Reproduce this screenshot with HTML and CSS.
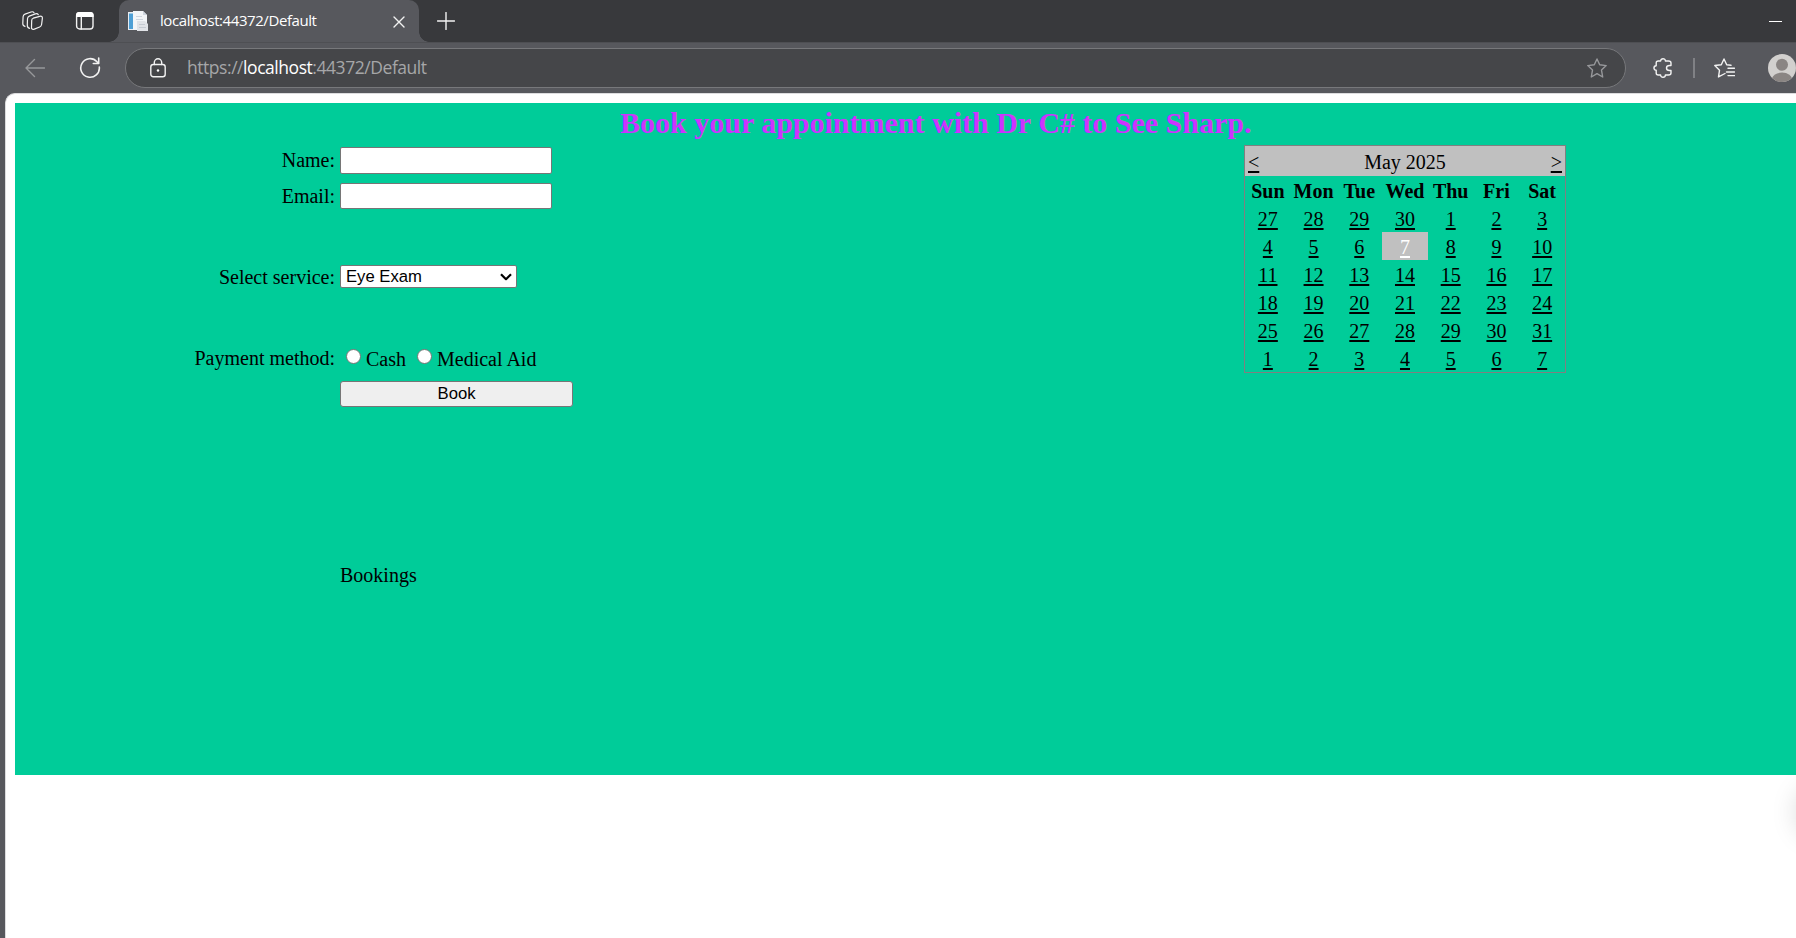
FILE: index.html
```html
<!DOCTYPE html>
<html lang="en">
<head>
<meta charset="utf-8">
<title>localhost:44372/Default</title>
<link rel="stylesheet" href="styles.css">
</head>
<body>
<div class="tabstrip">
  <svg class="workspaces" width="24" height="24" viewBox="0 0 24 24"><path d="M12.300 8.200 18.700 6.300Q21.600 5.700 21.400 8.200L20.600 14.500Q20.300 16.400 18.700 17L13.300 19.100Q10.300 20 10.500 17.300L10.700 10.500Q10.700 8.700 12.300 8.200ZM8.600 18.300Q6.200 17.800 6.300 15.300L6.500 8.700Q6.600 6.700 8.300 6.100L14.300 3.900Q16.500 3.300 17.300 4.700M4 16.300Q1.700 15.800 1.800 13.500L2.100 6.700Q2.200 4.700 4 4.100L10 2Q12.200 1.300 13 2.700"/></svg>
  <svg class="tabmenu" width="20" height="20" viewBox="0 0 20 20"><rect x="1.600" y="1.600" width="16.400" height="16.400" rx="3"/><path class="solid" d="M1 6V4Q1 1 4 1H15.500Q18.600 1 18.600 4V6Z"/><path d="M6.300 6V18"/></svg>
  <div class="tab">
    <svg class="favicon" width="20" height="20" viewBox="0 0 20 20"><path fill="#e9edf2" d="M0 1H9V19H0Z"/><path fill="#4f9fd5" d="M1 2.500H5V18H1Z"/><path fill="#f3f5f8" d="M5 0H15L19 4V19H5Z"/><path fill="#cfd6df" d="M15 0 19 4H15ZM8 5H14V6H8ZM8 8H15V9H8Z"/><path fill="#e1e3e8" d="M9 10H17L20 13V20H9Z"/><path fill="#c5cad2" d="M11 13H17V14H11ZM11 16H18V17H11Z"/></svg>
    <span class="tab-title">localhost:44372/Default</span>
    <svg class="close" width="12" height="12" viewBox="0 0 12 12"><path d="M1 1 11 11M11 1 1 11"/></svg>
  </div>
  <svg class="newtab" width="18" height="18" viewBox="0 0 18 18"><path d="M9 .5V17.500M.5 9H17.500"/></svg>
  <span class="minimize"></span>
</div>
<div class="toolbar">
  <svg class="back" width="20" height="20" viewBox="0 0 20 20"><path d="M19.500 10H1M9.500 1.500 1 10 9.500 18.500"/></svg>
  <svg class="reload" width="22" height="22" viewBox="0 0 22 22"><path d="M20.300 10A9.300 9.300 0 1 1 18 4.800L19.700 6.500M19.700 1V6.500H14.300"/></svg>
  <div class="address">
    <svg class="lock" width="16" height="20" viewBox="0 0 16 20"><rect x=".8" y="6.500" width="14.400" height="12.300" rx="2.500"/><path d="M4.300 6.500V4.500A3.700 3.700 0 0 1 11.700 4.500V6.500"/><circle class="solid" cx="8" cy="12.500" r="1.200"/></svg>
    <span class="url">https://<b>localhost</b>:44372/Default</span>
    <svg class="star" width="20" height="20" viewBox="0 0 20 20"><path d="M10 1 12.700 6.800 19.200 7.600 14.500 12.100 15.700 19 10 15.600 4.300 19 5.500 12.100.8 7.600 7.300 6.800Z"/></svg>
  </div>
  <svg class="extensions" width="20" height="20" viewBox="0 0 20 20"><path d="M5.200 3H7.600C7.600 0 12.400 0 12.400 3H15.500Q18 3 18 5V7.500H16.500C12.500 7.500 12.500 12.500 16.500 12.500H18V15Q18 17 15.500 17H12.400C12.400 20 7.600 20 7.600 17H5.200Q3.200 17 3.200 15V12.300C.2 12.300.2 7.700 3.200 7.700V5Q3.200 3 5.200 3Z"/></svg>
  <span class="divider"></span>
  <svg class="favorites" width="21" height="20" viewBox="0 0 21 20"><path d="M11 15.500 4.500 18.900 5.500 12.300.8 7.500 7.300 6.700 10 1 12.700 6.700 17 7.300M14 10.300H20.500M12.500 14H20.500M14 17.600H20.500"/></svg>
  <svg class="avatar" width="28" height="28" viewBox="0 0 28 28"><defs><clipPath id="disc"><circle cx="14" cy="14" r="14"/></clipPath></defs><g clip-path="url(#disc)"><rect width="28" height="28" fill="#d2d0ce"/><circle cx="14" cy="10.700" r="6" fill="#8a8583"/><ellipse cx="14" cy="26.500" rx="10.500" ry="8" fill="#8a8583"/></g></svg>
</div>
<div class="viewport">
  <form class="panel">
    <h2>Book your appointment with Dr C# to See Sharp.</h2>
    <div class="fields">
      <label class="name">Name:</label><input class="text-name" type="text">
      <label class="email">Email:</label><input class="text-email" type="text">
      <label class="service">Select service:</label>
      <div class="select"><span>Eye Exam</span><svg width="12" height="8" viewBox="0 0 12 8"><path d="M1 1.200 6 6.200 11 1.200"/></svg></div>
      <label class="payment">Payment method:</label>
      <div class="radios"><i></i><span>Cash</span><i></i><span>Medical Aid</span></div>
      <button class="book" type="button">Book</button>
      <span class="bookings">Bookings</span>
    </div>
    <div class="calendar">
      <div class="month"><a>&lt;</a><span>May 2025</span><a>&gt;</a></div>
      <div class="days">
        <b>Sun</b><b>Mon</b><b>Tue</b><b>Wed</b><b>Thu</b><b>Fri</b><b>Sat</b>
        <a>27</a><a>28</a><a>29</a><a>30</a><a>1</a><a>2</a><a>3</a>
        <a>4</a><a>5</a><a>6</a><a class="selected">7</a><a>8</a><a>9</a><a>10</a>
        <a>11</a><a>12</a><a>13</a><a>14</a><a>15</a><a>16</a><a>17</a>
        <a>18</a><a>19</a><a>20</a><a>21</a><a>22</a><a>23</a><a>24</a>
        <a>25</a><a>26</a><a>27</a><a>28</a><a>29</a><a>30</a><a>31</a>
        <a>1</a><a>2</a><a>3</a><a>4</a><a>5</a><a>6</a><a>7</a>
      </div>
    </div>
  </form>
  <span class="edge-shadow"></span>
</div>
</body>
</html>
```
FILE: styles.css
```css
* { box-sizing: border-box; }
body {
  margin: 0;
  width: 1796px;
  height: 938px;
  overflow: hidden;
  display: flex;
  flex-direction: column;
  background: #57585d;
  font: 20px/28px "Liberation Serif", "Times New Roman", serif;
  color: #000;
}
svg { flex: none; fill: none; stroke: #f2f2f2; stroke-width: 1.4; stroke-linecap: round; stroke-linejoin: round; }
svg .solid { fill: #fff; stroke: none; }

.tabstrip { height: 42px; flex: none; display: flex; align-items: center; background: #38393c; }
.workspaces { margin-left: 21px; margin-top: 2px; stroke-width: 1.2; }
.tabmenu { margin-left: 30px; }
.tab {
  position: relative;
  width: 300px;
  height: 42px;
  margin-left: 24px;
  padding: 0 14px 0 9px;
  display: flex;
  align-items: center;
  background: #57585d;
  border-radius: 10px 10px 0 0;
}
.tab::before, .tab::after {
  content: "";
  position: absolute;
  bottom: 0;
  width: 10px;
  height: 10px;
}
.tab::before { left: -10px; background: radial-gradient(circle at 0 0, #38393c 9.5px, #57585d 10px); }
.tab::after { right: -10px; background: radial-gradient(circle at 100% 0, #38393c 9.5px, #57585d 10px); }
.favicon, .avatar { stroke: none; }
.tab-title { margin: 0 0 2px 12px; flex: 1; font: 15px/20px "Open Sans", sans-serif; letter-spacing: -0.42px; color: #fff; white-space: nowrap; }
.close { margin-top: 2px; }
.newtab { margin-left: 18px; }
.minimize { width: 13px; height: 1px; margin: 0 14px 0 auto; background: #fff; }

.toolbar { height: 51px; flex: none; display: flex; align-items: center; border-top: 1px solid #4e4f53; }
.toolbar > * { margin-bottom: 1px; }
.back { margin-left: 25px; stroke: #97989b; }
.reload { margin-left: 34px; stroke-width: 1.6; }
.address {
  width: 1503px;
  height: 40px;
  margin-left: 24px;
  padding: 0 18px 0 24px;
  display: flex;
  align-items: center;
  background: #454649;
  border: 1px solid #77787b;
  border-radius: 20px;
}
.url { margin: 0 0 1px 21px; flex: 1; font: 17.500px/24px "Open Sans", sans-serif; letter-spacing: -0.45px; color: #a6a6a8; }
.url b { font-weight: 400; color: #fff; }
.star { stroke: #97989b; }
.extensions { margin-left: 27px; }
.divider { width: 2px; height: 20px; margin-left: 20px; background: #808185; }
.favorites { margin-left: 19px; }
.avatar { margin-left: 33px; }

.viewport {
  position: relative;
  flex: 1;
  margin-left: 5px;
  padding: 9px 0 0 9px;
  background: #fff;
  border-left: 1px solid #dcdcde;
  border-top: 1px solid #dcdcde;
  border-top-left-radius: 10px;
}
.panel {
  width: 1781px;
  height: 672px;
  background: #00cc99;
  display: grid;
  grid-template: 42px 1fr / 1229px 322px;
}
h2 { grid-column: 1 / 3; margin: 0 0 0 605px; font: bold 30px/39px "Liberation Serif", "Times New Roman", serif; color: #cc33ff; white-space: nowrap; }
.fields {
  display: grid;
  grid-template-columns: 320px 233px;
  grid-template-rows: 36px 66px 78px 54px 180px 1fr;
  column-gap: 5px;
  align-items: start;
  padding-top: 2px;
}
label { text-align: right; }
.name, .email { line-height: 27px; }
input { width: 212px; height: 27px; padding: 0; border: 1px solid #767676; border-radius: 2px; background: #fff; }
.text-email { height: 26px; }
.service { padding-top: 14px; line-height: 28px; }
.select {
  width: 177px;
  height: 23px;
  margin-top: 16px;
  padding: 0 4px 0 5px;
  display: flex;
  align-items: center;
  justify-content: space-between;
  background: #fff;
  border: 1px solid #767676;
  border-radius: 2px;
  font: 16.670px/20px "Liberation Sans", Arial, sans-serif;
}
.select svg { stroke: #000; stroke-width: 2.200; stroke-linecap: butt; }
.payment { padding-top: 17px; }
.radios { display: flex; padding: 18px 0 0 6px; white-space: nowrap; }
.radios i { width: 15px; height: 15px; margin: 4px 5px 0 0; background: #fff; border: 1px solid #767676; border-radius: 50%; }
.radios span { margin-right: 11px; }
.book {
  grid-column: 2;
  width: 233px;
  height: 26px;
  padding: 0;
  margin: 0;
  background: #efefef;
  border: 1px solid #767676;
  border-radius: 3px;
  font: 16.670px/22px "Liberation Sans", Arial, sans-serif;
}
.bookings { grid-column: 2; }

.calendar { height: 228px; display: flex; flex-direction: column; border: 1px solid #808080; text-align: center; }
.month { height: 30px; flex: none; padding: 2px 3px 0; display: flex; justify-content: space-between; background: #c0c0c0; }
.days { display: grid; grid-template-columns: repeat(7, 1fr); grid-auto-rows: 28px; line-height: 30px; }
.calendar a { text-decoration: underline; text-decoration-thickness: 2px; text-underline-offset: 2px; }
.selected { background: #c0c0c0; color: #fff; }

.edge-shadow { position: absolute; right: -50px; top: 694px; width: 48px; height: 48px; border-radius: 50%; box-shadow: 0 0 28px rgba(0, 0, 0, .18); }
```
